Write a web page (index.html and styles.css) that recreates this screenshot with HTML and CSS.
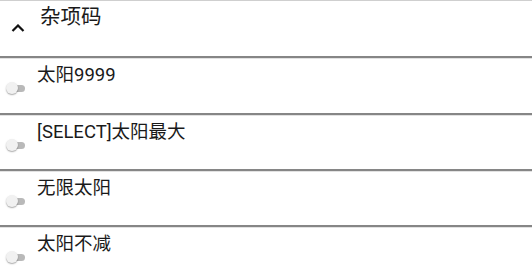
FILE: index.html
```html
<!DOCTYPE html>
<html>
<head>
<meta charset="utf-8">
<link rel="stylesheet" href="styles.css">
</head>
<body>
<div class="panel">
  <div class="header">
    <svg class="chevron" width="14" height="8" viewBox="0 0 14 8"><polyline points="1.5,7 7,1.5 12.5,7" fill="none" stroke="#111" stroke-width="2.2"/></svg>
    <span class="title">杂项码</span>
  </div>
  <div class="row first">
    <div class="divider"></div>
    <div class="content"><span class="toggle"><span class="thumb"></span></span><span class="label">太阳9999</span></div>
  </div>
  <div class="row">
    <div class="divider"></div>
    <div class="content"><span class="toggle"><span class="thumb"></span></span><span class="label">[SELECT]太阳最大</span></div>
  </div>
  <div class="row">
    <div class="divider"></div>
    <div class="content"><span class="toggle"><span class="thumb"></span></span><span class="label">无限太阳</span></div>
  </div>
  <div class="row">
    <div class="divider"></div>
    <div class="content"><span class="toggle"><span class="thumb"></span></span><span class="label">太阳不减</span></div>
  </div>
</div>
</body>
</html>
```
FILE: styles.css
```css
html, body {
  margin: 0;
  padding: 0;
  background: #ffffff;
}
body {
  width: 532px;
  height: 277px;
  overflow: hidden;
  font-family: Roboto, "Noto Sans CJK SC", sans-serif;
  color: #1a1a1a;
}
.panel {
  display: flex;
  flex-direction: column;
}
.header {
  height: 55px;
  border-top: 1px solid #cfcfcf;
  display: flex;
  align-items: flex-start;
}
.chevron {
  margin: 23px 0 0 11px;
  flex: none;
}
.title {
  font-size: 20.5px;
  line-height: 24px;
  margin: 4px 0 0 15px;
}
.row {
  height: 56px;
  display: flex;
  flex-direction: column;
}
.row.first {
  height: 57px;
}
.divider {
  height: 3px;
  flex: none;
  background: linear-gradient(#868686 0, #868686 2px, #e2e2e2 2px, #e2e2e2 3px);
}
.content {
  display: flex;
  align-items: flex-start;
  padding-top: 5px;
}
.toggle {
  position: relative;
  flex: none;
  width: 17px;
  height: 7px;
  margin: 21px 0 0 8px;
  border-radius: 4px;
  background: #b9b9b9;
}
.thumb {
  position: absolute;
  left: -2px;
  top: -3px;
  width: 12px;
  height: 12px;
  border-radius: 50%;
  background: #f1f1f1;
  box-shadow: 0 1px 1.5px rgba(0,0,0,0.35);
}
.label {
  font-size: 18.5px;
  line-height: 22px;
  margin-left: 12px;
}
```
